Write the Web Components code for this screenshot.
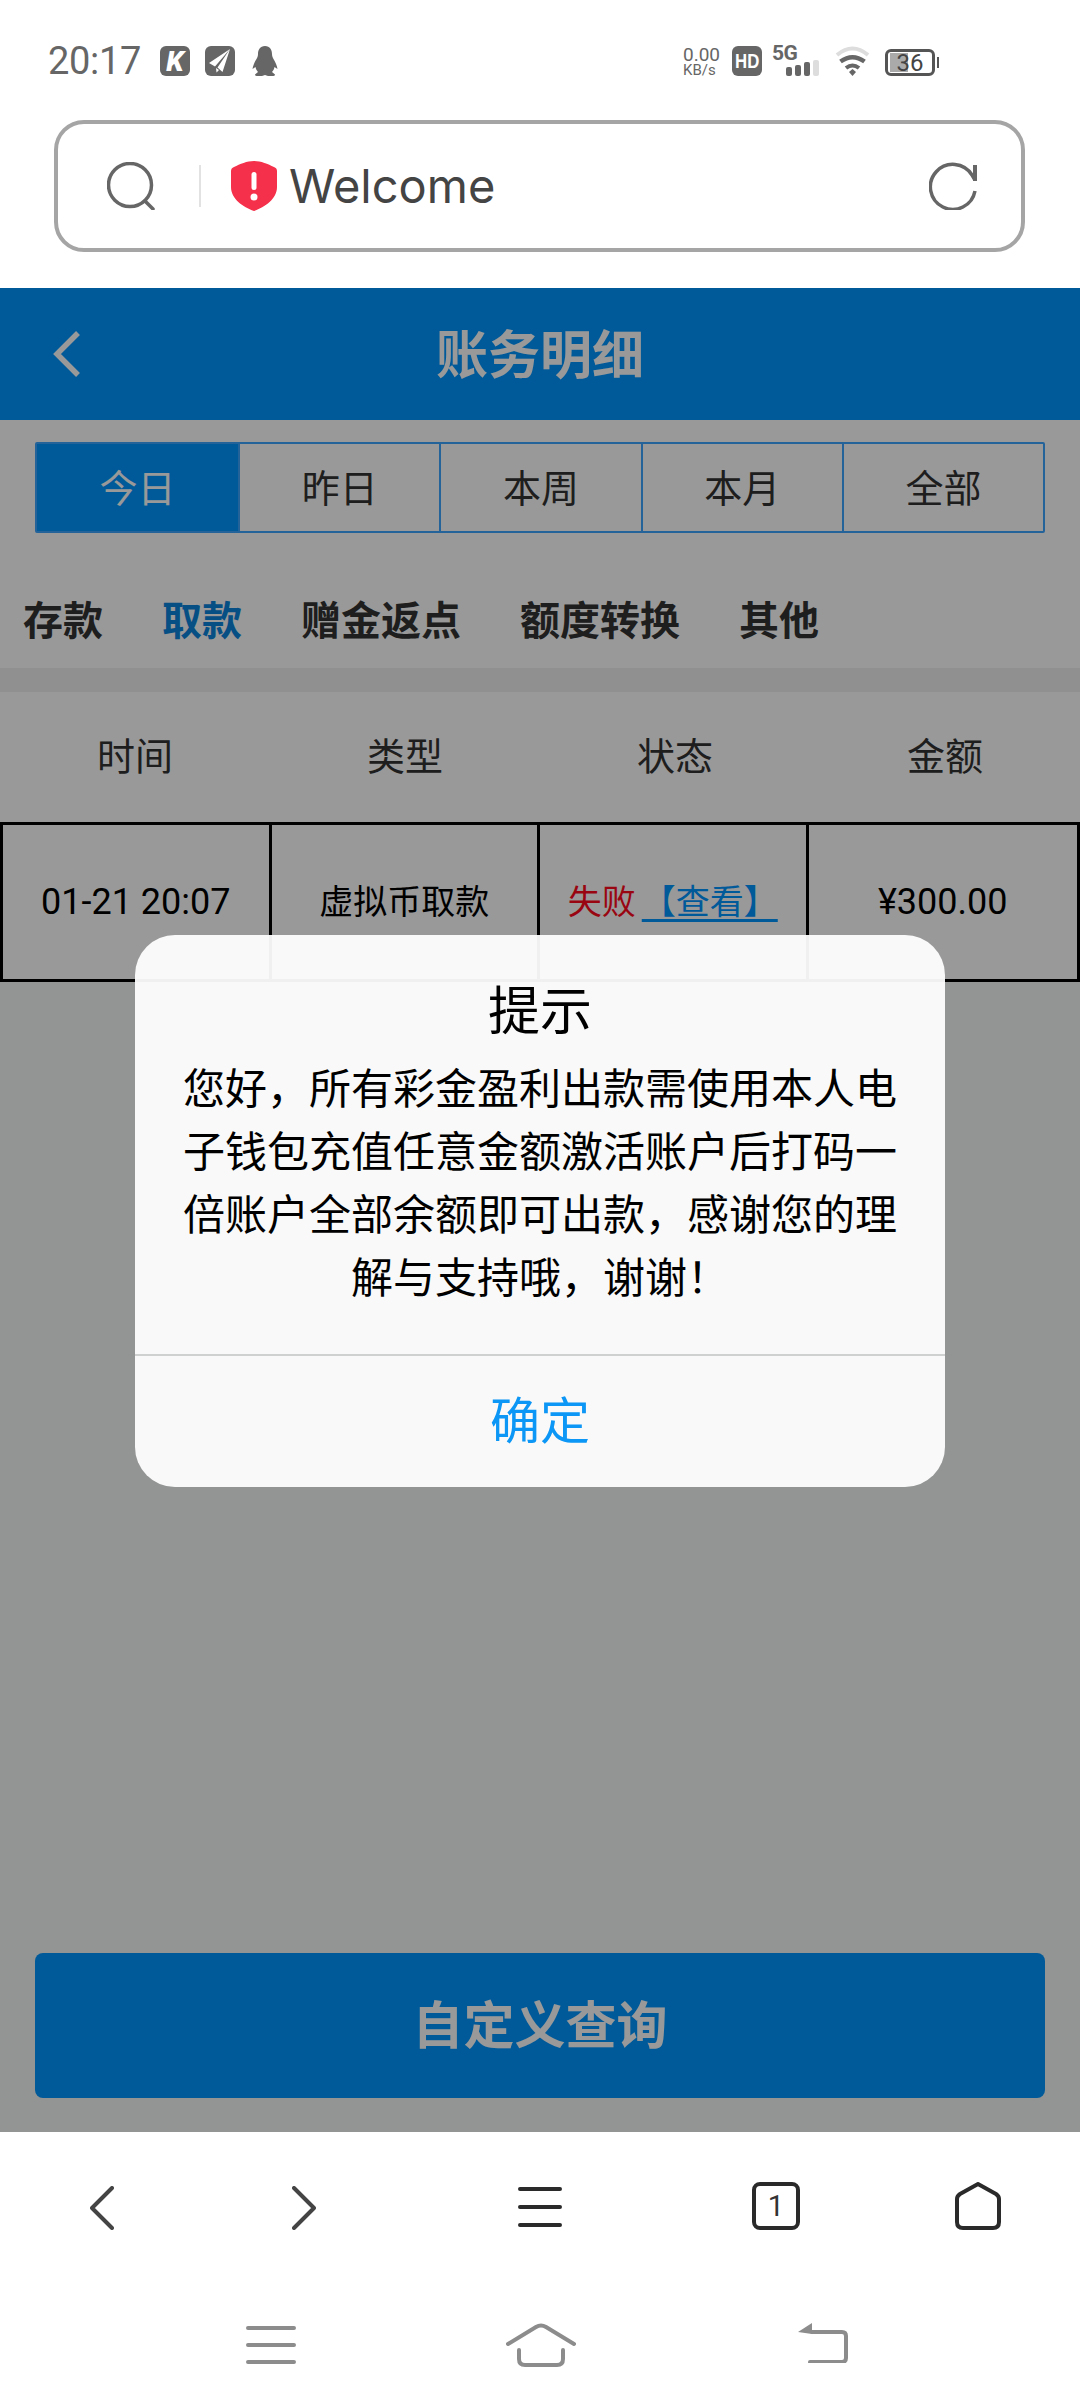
<!DOCTYPE html>
<html lang="zh">
<head>
<meta charset="utf-8">
<title>账务明细</title>
<style>
    html, body { margin: 0; padding: 0; }
    body {
        width: 1080px;
        height: 2408px;
        overflow: hidden;
        display: flex;
        flex-direction: column;
        background: #fff;
        font-family: Roboto, "Noto Sans CJK SC", sans-serif;
    }
    web-view { flex: 1; }
</style>
</head>
<body>
<status-bar></status-bar>
<address-bar>Welcome</address-bar>
<web-view>
    <page-header>账务明细</page-header>
    <range-tabs></range-tabs>
    <type-nav></type-nav>
    <record-table></record-table>
    <query-button>自定义查询</query-button>
    <alert-dialog title="提示" confirm="确定">您好，所有彩金盈利出款需使用本人电子钱包充值任意金额激活账户后打码一倍账户全部余额即可出款，感谢您的理解与支持哦，谢谢！</alert-dialog>
</web-view>
<browser-nav></browser-nav>
<system-nav></system-nav>

<script>
class StatusBar extends HTMLElement {
    constructor() {
        super();
        this.attachShadow({ mode: 'open' }).innerHTML = `
            <style>
                :host { display: flex; height: 120px; box-sizing: border-box; padding: 46px 0 0 48px; color: #666; font-family: Roboto, sans-serif; }
                .time { font-size: 38px; line-height: 30px; width: 112px; letter-spacing: -0.3px; }
                .tile { width: 30px; height: 30px; border-radius: 6px; background: #666; color: #fff; display: flex; align-items: center; justify-content: center; font-weight: 900; }
                .k { font-size: 28px; font-style: italic; margin-right: 15px; }
                .plane { margin-right: 17px; }
                .speed { margin-left: auto; width: 49px; display: flex; flex-direction: column; font-size: 19px; line-height: 17px; }
                .speed small { font-size: 15px; line-height: 15px; }
                .hd { font-family: "Liberation Sans", sans-serif; font-weight: 700; font-size: 21px; margin-right: 10px; }
                .hd span { display: inline-block; transform: scaleX(0.8); }
                .net { width: 48px; height: 30px; margin-right: 15px; display: flex; flex-direction: column; }
                .net b { font-size: 21px; line-height: 15px; letter-spacing: -0.5px; }
                .bars { display: flex; gap: 3px; align-items: flex-end; margin-left: 14px; height: 15px; }
                .bars i { width: 6px; background: #666; border-radius: 2px; }
                .wifi { margin-right: 15px; }
                .battery { width: 50px; height: 27px; margin-top: 3px; box-sizing: border-box; border: 3px solid #555; border-radius: 6px; padding: 1px 2px; }
                .level { height: 100%; display: flex; align-items: center; justify-content: center; color: #444; font-size: 24px; background: linear-gradient(90deg, #aaa 18px, transparent 18px); }
                .tip { width: 2px; height: 11px; margin: 11px 141px 0 2px; background: #555; }
            </style>
            <span class="time">20:17</span>
            <span class="tile k">K</span>
            <span class="tile plane">
                <svg width="30" height="30" viewBox="0 0 30 30" fill="#fff"><path d="M25 3 4 17l6 3.500zM25 3 12.500 21.500l5 4.500zM11 22l.5 4.500 2.500-2.500z"/></svg>
            </span>
            <svg width="26" height="30" viewBox="0 0 26 30" fill="#666"><path d="M13 0C8 0 6 4 6 8c0 2-.5 3-1.500 5C2.500 16 1 20 .5 23l3-2c.5 2 1 3.500 2.500 5l-3 2.500Q3 30 6 30h4l3-1 3 1h4q3 0 3-1.500L20 26c1.500-1.500 2-3 2.500-5l3 2c-.5-3-2-7-4-10-1-2-1.500-3-1.500-5 0-4-2-8-7-8z"/></svg>
            <span class="speed">0.00<small>KB/s</small></span>
            <span class="tile hd"><span>HD</span></span>
            <span class="net"><b>5G</b><span class="bars"><i style="height:9px"></i><i style="height:11px"></i><i style="height:14px"></i><i style="height:16px;background:#ddd"></i></span></span>
            <svg class="wifi" width="35" height="30" viewBox="0 0 35 30" fill="none">
                <path d="M2 9Q17.500-4 33 9" stroke="#ddd" stroke-width="4"/>
                <path d="M5.500 15.500Q17.500 7 29.500 15.500" stroke="#666" stroke-width="4.500"/>
                <path d="M11 22Q17.500 17 24 22" stroke="#666" stroke-width="4"/>
                <path d="M14 26 17.500 23 21 26 17.500 30z" fill="#666"/>
            </svg>
            <span class="battery"><span class="level">36</span></span>
            <span class="tip"></span>
        `;
    }
}

class AddressBar extends HTMLElement {
    constructor() {
        super();
        this.attachShadow({ mode: 'open' }).innerHTML = `
            <style>
                :host { display: block; height: 168px; box-sizing: border-box; padding: 0 55px 36px 54px; }
                .box { height: 132px; box-sizing: border-box; border: 4px solid #a5a5a5; border-radius: 30px; display: flex; align-items: center; padding-left: 49px; }
                .line { width: 2px; height: 42px; background: #e2e2e2; margin: 0 30px 0 44px; }
                .text { font: 400 47px/56px Inter, Roboto, sans-serif; color: #444; margin-left: 12px; }
                .reload { margin-left: auto; margin-right: 44px; }
            </style>
            <div class="box">
                <svg width="48" height="48" viewBox="0 0 48 48" fill="none" stroke="#666" stroke-width="3.500" stroke-linecap="round"><circle cx="23" cy="23" r="21.500"/><path d="M38 39l8 8"/></svg>
                <span class="line"></span>
                <svg width="46" height="50" viewBox="0 0 46 50"><path d="M23 0c7 0 14 3 20 6q3 1 3 4v16c0 12-12 20-23 24C12 46 0 38 0 26V10q0-3 3-4C9 3 16 0 23 0z" fill="#f5304a"/><rect x="20.500" y="11" width="5" height="18" rx="2.500" fill="#fff"/><circle cx="23" cy="36" r="3.500" fill="#fff"/></svg>
                <span class="text"><slot></slot></span>
                <svg class="reload" width="48" height="48" viewBox="0 0 48 48" fill="none" stroke="#666" stroke-width="3.500"><path d="M46 29A22.500 22.500 0 1 1 43 13L46 18"/><path d="M46 3v16" stroke-width="4"/></svg>
            </div>
        `;
    }
}

class PageHeader extends HTMLElement {
    constructor() {
        super();
        this.attachShadow({ mode: 'open' }).innerHTML = `
            <style>
                :host { display: flex; height: 132px; box-sizing: border-box; padding-bottom: 5px; background: #0096ff; color: #fff; align-items: center; justify-content: center; position: relative; font-size: 52px; font-weight: 700; }
                svg { position: absolute; left: 52px; top: 43px; }
            </style>
            <svg width="30" height="46" viewBox="0 0 30 46" fill="none" stroke="#fff" stroke-width="5.500"><path d="M26 2 5 23l21 21"/></svg>
            <slot></slot>
        `;
    }
}

class RangeTabs extends HTMLElement {
    constructor() {
        super();
        const items = ['今日', '昨日', '本周', '本月', '全部'];
        this.attachShadow({ mode: 'open' }).innerHTML = `
            <style>
                :host { display: block; padding: 22px 35px 0; background: #fff; }
                .tabs { display: grid; grid-template-columns: repeat(5, 1fr); height: 91px; box-sizing: border-box; border: 2px solid #3da5ff; font-size: 38px; color: #333; border-radius: 2px; }
                .tabs span { display: flex; align-items: center; justify-content: center; padding-bottom: 5px; }
                .tabs span + span { border-left: 2px solid #3da5ff; }
                .tabs .on { background: #0096ff; color: #fff; }
            </style>
            <div class="tabs">
                ${items.map((t, i) => `<span class="${i === 0 ? 'on' : ''}">${t}</span>`).join('')}
            </div>
        `;
    }
}

class TypeNav extends HTMLElement {
    constructor() {
        super();
        const items = ['存款', '取款', '赠金返点', '额度转换', '其他'];
        this.attachShadow({ mode: 'open' }).innerHTML = `
            <style>
                :host { display: flex; gap: 59px; height: 135px; box-sizing: border-box; padding: 64px 0 0 23px; background: #fff; font-size: 40px; line-height: 50px; font-weight: 700; color: #333; }
                .on { color: #0a84dc; }
            </style>
            ${items.map((t, i) => `<span class="${i === 1 ? 'on' : ''}">${t}</span>`).join('')}
        `;
    }
}

class RecordTable extends HTMLElement {
    constructor() {
        super();
        this.attachShadow({ mode: 'open' }).innerHTML = `
            <style>
                :host { display: block; border-top: 24px solid #eef1ee; background: #fff; color: #000; }
                .head, .row { display: grid; grid-template-columns: repeat(4, 1fr); text-align: center; }
                .head { height: 130px; box-sizing: border-box; padding-bottom: 8px; align-items: center; font-size: 38px; color: #333; }
                .row { height: 160px; box-sizing: border-box; border: 3px solid #000; font-size: 36px; }
                .row span { display: flex; align-items: center; justify-content: center; white-space: nowrap; }
                .row span:not(:last-child) { border-right: 3px solid #000; }
                .row .small { font-size: 34px; padding-bottom: 5px; }
                .fail { color: #ff0a1e; font-style: normal; }
                a { color: #0096ff; text-decoration: underline; text-decoration-thickness: 3px; text-underline-offset: 5px; margin-left: 6px; }
            </style>
            <div class="head"><span>时间</span><span>类型</span><span>状态</span><span>金额</span></div>
            <div class="row">
                <span>01-21 20:07</span>
                <span class="small">虚拟币取款</span>
                <span class="small"><em class="fail">失败</em><a>【查看】</a></span>
                <span>¥300.00</span>
            </div>
        `;
    }
}

class QueryButton extends HTMLElement {
    constructor() {
        super();
        this.attachShadow({ mode: 'open' }).innerHTML = `
            <style>
                :host { display: flex; height: 145px; box-sizing: border-box; padding-bottom: 8px; margin: auto 35px 34px; border-radius: 8px; background: #0096ff; color: #fff; font-size: 51px; font-weight: 700; align-items: center; justify-content: center; }
            </style>
            <slot></slot>
        `;
    }
}

class AlertDialog extends HTMLElement {
    constructor() {
        super();
        this.attachShadow({ mode: 'open' }).innerHTML = `
            <style>
                :host { display: block; position: absolute; inset: 0; background: rgba(0, 0, 0, 0.4); }
                .dialog { position: absolute; left: 135px; top: 647px; width: 810px; height: 552px; box-sizing: border-box; border-radius: 40px; background: rgba(255, 255, 255, 0.94); display: flex; flex-direction: column; color: #000; text-align: center; }
                .title { font-size: 52px; line-height: 64px; margin-top: 46px; }
                .body { flex: 1; font-size: 42px; line-height: 63px; padding: 13px 45px 0; }
                .ok { height: 133px; box-sizing: border-box; padding-bottom: 10px; border-top: 2px solid #cfd0d0; display: flex; align-items: center; justify-content: center; font-size: 50px; color: #0c96f5; }
            </style>
            <div class="dialog">
                <div class="title"></div>
                <div class="body"><slot></slot></div>
                <div class="ok"></div>
            </div>
        `;
    }

    connectedCallback() {
        this.shadowRoot.querySelector('.title').textContent = this.getAttribute('title');
        this.shadowRoot.querySelector('.ok').textContent = this.getAttribute('confirm');
    }
}

class WebView extends HTMLElement {
    constructor() {
        super();
        this.attachShadow({ mode: 'open' }).innerHTML = `
            <style>
                :host { display: flex; flex-direction: column; position: relative; background: #f5f8f7; }
                main { flex: 1; display: flex; flex-direction: column; }
            </style>
            <main><slot></slot></main>
        `;
    }
}

class BrowserNav extends HTMLElement {
    constructor() {
        super();
        this.attachShadow({ mode: 'open' }).innerHTML = `
            <style>
                :host { display: flex; height: 144px; box-sizing: border-box; padding: 50px 0 0 90px; align-items: flex-start; font-family: Roboto, sans-serif; }
                svg { flex: none; fill: none; stroke-linecap: round; stroke-linejoin: round; }
                .tabs { width: 48px; height: 48px; margin-left: 190px; box-sizing: border-box; border: 4px solid #2a2a2a; border-radius: 8px; display: flex; align-items: center; justify-content: center; font-size: 29px; color: #333; }
            </style>
            <svg width="24" height="44" viewBox="0 0 24 44" stroke="#444" stroke-width="4" style="margin-top:4px"><path d="M22 2 2 22l20 20"/></svg>
            <svg width="24" height="44" viewBox="0 0 24 44" stroke="#444" stroke-width="4" style="margin:4px 0 0 178px"><path d="M2 2l20 20L2 42"/></svg>
            <svg width="44" height="40" viewBox="0 0 44 40" stroke="#2a2a2a" stroke-width="4" style="margin:5px 0 0 202px"><path d="M2 2h40M2 20h40M2 38h40"/></svg>
            <span class="tabs">1</span>
            <svg width="46" height="48" viewBox="0 0 46 48" stroke="#2a2a2a" stroke-width="4" style="margin-left:155px"><path d="M23 2 41 12q3 2 3 5v23q0 6-6 6H8q-6 0-6-6V17q0-3 3-5z"/></svg>
        `;
    }
}

class SystemNav extends HTMLElement {
    constructor() {
        super();
        this.attachShadow({ mode: 'open' }).innerHTML = `
            <style>
                :host { display: flex; height: 132px; box-sizing: border-box; padding: 47px 0 0 246px; align-items: flex-start; }
                svg { flex: none; fill: none; stroke: #8c8c8c; stroke-width: 4; stroke-linecap: round; stroke-linejoin: round; }
            </style>
            <svg width="50" height="40" viewBox="0 0 50 40" style="margin-top:2px"><path d="M2 3h46M2 20h46M2 37h46"/></svg>
            <svg width="70" height="44" viewBox="0 0 70 44" style="margin-left:210px"><path d="M2 21 30 4q5-3 10 0l28 17"/><path d="M13 27v9q0 6 6 6h32q6 0 6-6v-9"/></svg>
            <svg width="50" height="40" viewBox="0 0 50 40" style="margin-left:222px"><path d="M14 9h30q4 0 4 4v22q0 4-4 4H12"/><path d="M14 0v11L0 9z" fill="#8c8c8c" stroke="none"/></svg>
        `;
    }
}

customElements.define('status-bar', StatusBar);
customElements.define('address-bar', AddressBar);
customElements.define('page-header', PageHeader);
customElements.define('range-tabs', RangeTabs);
customElements.define('type-nav', TypeNav);
customElements.define('record-table', RecordTable);
customElements.define('query-button', QueryButton);
customElements.define('alert-dialog', AlertDialog);
customElements.define('web-view', WebView);
customElements.define('browser-nav', BrowserNav);
customElements.define('system-nav', SystemNav);
</script>
</body>
</html>
